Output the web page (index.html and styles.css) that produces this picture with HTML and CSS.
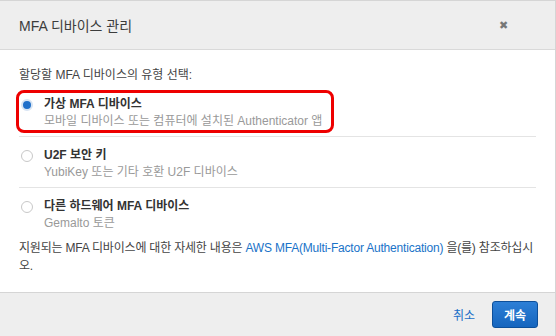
FILE: index.html
```html
<!DOCTYPE html>
<html lang="ko">
<head>
<meta charset="utf-8">
<link rel="stylesheet" href="styles.css">
</head>
<body>
<div class="modal">
  <div class="header">
    <div class="title">MFA 디바이스 관리</div>
    <div class="close">✖</div>
  </div>
  <div class="body">
    <div class="prompt">할당할 MFA 디바이스의 유형 선택:</div>
    <div class="options">
      <div class="option">
        <span class="radio checked"></span>
        <div class="text">
          <div class="label">가상 MFA 디바이스</div>
          <div class="desc">모바일 디바이스 또는 컴퓨터에 설치된 Authenticator 앱</div>
        </div>
      </div>
      <div class="option">
        <span class="radio"></span>
        <div class="text">
          <div class="label">U2F 보안 키</div>
          <div class="desc">YubiKey 또는 기타 호환 U2F 디바이스</div>
        </div>
      </div>
      <div class="option last">
        <span class="radio"></span>
        <div class="text">
          <div class="label">다른 하드웨어 MFA 디바이스</div>
          <div class="desc">Gemalto 토큰</div>
        </div>
      </div>
      <div class="highlight"></div>
    </div>
    <p class="info">지원되는 MFA 디바이스에 대한 자세한 내용은 <a class="link">AWS MFA(Multi-Factor Authentication)</a> 을(를) 참조하십시오.</p>
  </div>
  <div class="footer">
    <a class="cancel">취소</a>
    <button class="primary">계속</button>
  </div>
</div>
</body>
</html>
```
FILE: styles.css
```css
* { box-sizing: border-box; }
html, body { margin: 0; padding: 0; background: #fff; }
body {
  font-family: "Liberation Sans", "Noto Sans CJK KR", sans-serif;
  font-size: 12px;
  color: #444;
}
.modal {
  width: 556px;
  height: 336px;
  display: flex;
  flex-direction: column;
  border-top: 1px solid #d5d5d5;
  border-right: 1px solid #d5d5d5;
}
.header {
  height: 49px;
  background: #eeeeee;
  border-bottom: 1px solid #d9d9d9;
  display: flex;
  align-items: center;
  justify-content: space-between;
  padding: 0 47px 0 19px;
}
.title { font-size: 14px; color: #3c3c3c; }
.close { font-size: 11px; color: #777; }
.body {
  flex: 1;
  padding: 16px 19px 0 19px;
}
.prompt { line-height: 18px; margin-bottom: 2px; }
.options { position: relative; }
.option {
  display: flex;
  align-items: flex-start;
  height: 51px;
  padding-top: 10px;
  border-bottom: 1px solid #e4e4e4;
}
.option.last { border-bottom: none; }
.radio {
  width: 12px;
  height: 12px;
  border-radius: 50%;
  border: 1px solid #c8c8c8;
  background: #fff;
  margin: 3px 11px 0 2px;
  flex: none;
}
.radio.checked {
  background: #1f6fc9;
  border: 2px solid #d7e4f3;
}
.label { font-weight: bold; color: #333; line-height: 17px; }
.desc { color: #999; line-height: 17px; }
.highlight {
  position: absolute;
  left: -3px;
  top: 4px;
  width: 318px;
  height: 43px;
  border: 3px solid #ee0000;
  border-radius: 8px;
}
.info { margin: 0 -4px 0 0; line-height: 18px; word-break: break-all; letter-spacing: -0.2px; }
.link { color: #1a73c8; }
.footer {
  height: 44px;
  background: #eeeeee;
  border-top: 1px solid #d5d5d5;
  display: flex;
  align-items: center;
  justify-content: flex-end;
  padding: 0 17px 0 0;
  gap: 17px;
}
.cancel { color: #1a6ec8; }
.primary {
  font-family: inherit;
  font-size: 12px;
  font-weight: bold;
  color: #fff;
  background: linear-gradient(#2d7fd6, #1665be);
  border: 1px solid #0d4f9a;
  border-radius: 3px;
  width: 46px;
  height: 27px;
  padding: 0;
}
```
